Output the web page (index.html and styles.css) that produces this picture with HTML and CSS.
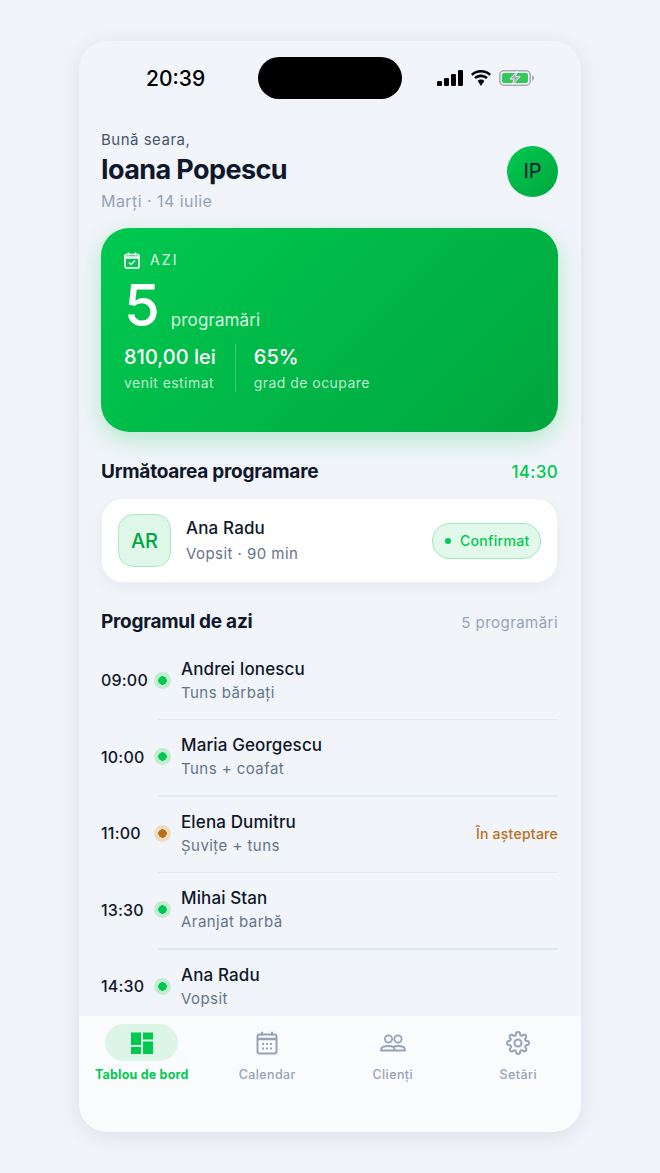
FILE: index.html
```html
<!DOCTYPE html>
<html lang="ro">
<head>
<meta charset="utf-8">
<title>Tablou de bord</title>
<link rel="stylesheet" href="styles.css">
</head>
<body>
<main class="phone">
  <div class="status">
    <span class="clock">20:39</span>
    <span class="island"></span>
    <span class="status-icons">
      <svg width="26" height="16" viewBox="0 0 26 16"><rect x="0" y="11" width="5" height="5" rx="1.2"/><rect x="7" y="8" width="5" height="8" rx="1.2"/><rect x="14" y="4" width="5" height="12" rx="1.2"/><rect x="21" y="0" width="5" height="16" rx="1.2"/></svg>
      <svg width="22" height="16" viewBox="0 0 22 16"><path d="M11 2.6c3.2 0 6.1 1.2 8.3 3.2l1.7-1.8C18.300 1.500 14.800 0 11 0S3.700 1.500 1 4l1.700 1.800C4.900 3.800 7.800 2.600 11 2.600z"/><path d="M11 7.200c1.900 0 3.700.7 5 1.900l1.800-1.800C16 5.600 13.600 4.600 11 4.600s-5 1-6.800 2.700L6 9.100c1.300-1.200 3.100-1.900 5-1.900z"/><path d="M11 9.600c-1.300 0-2.400.5-3.300 1.300L11 16l3.300-5.100c-.9-.8-2-1.300-3.300-1.300z"/></svg>
      <svg width="36" height="16" viewBox="0 0 36 16"><rect x=".8" y=".8" width="30.400" height="14.400" rx="4" fill="none" stroke="#a9adb3" stroke-width="1.600"/><rect x="3" y="3" width="26" height="10" rx="2" fill="#34c759"/><path d="M33 5.500c1.300.3 2 1.300 2 2.500s-.7 2.200-2 2.500z" fill="#a9adb3"/><path d="M18.500 1 11 9h4l-2 6 8-8.500h-4.300z" fill="#a9adb3" stroke="#f1f4f9" stroke-width="1"/></svg>
    </span>
  </div>
  <div class="scroll">
    <header class="head">
      <div class="head-text">
        <p class="hello">Bună seara,</p>
        <h1 class="name">Ioana Popescu</h1>
        <p class="date">Marți · 14 iulie</p>
      </div>
      <div class="avatar">IP</div>
    </header>

    <section class="hero">
      <div class="hero-top">
        <svg width="16" height="17" viewBox="0 0 16 17" fill="none" stroke="#fff"><rect x="1" y="2.500" width="14" height="13.500" rx="1.800" stroke-width="1.700"/><path d="M1 5.500h14" stroke-width="2.500"/><path d="M4.500 .5v3M11.500 .5v3" stroke-width="1.700"/><path d="m5 10.500 2 2 4-4" stroke-width="1.300"/></svg>
        <span>AZI</span>
      </div>
      <div class="hero-count"><span class="big">5</span><span class="unit">programări</span></div>
      <div class="stats">
        <div class="stat"><div class="stat-value">810,00 lei</div><div class="stat-label">venit estimat</div></div>
        <div class="stat stat-second"><div class="stat-value">65%</div><div class="stat-label">grad de ocupare</div></div>
      </div>
    </section>

    <div class="section-head next-head">
      <h2>Următoarea programare</h2>
      <span class="next-time">14:30</span>
    </div>
    <section class="next-card">
      <div class="initials">AR</div>
      <div class="next-info">
        <div class="next-name">Ana Radu</div>
        <div class="next-sub">Vopsit · 90 min</div>
      </div>
      <div class="pill"><i class="pill-dot"></i>Confirmat</div>
    </section>

    <div class="section-head today-head">
      <h2>Programul de azi</h2>
      <span class="count">5 programări</span>
    </div>

    <ul class="list">
      <li class="row"><span class="time">09:00</span><i class="dot"></i><div class="row-body"><div class="row-name">Andrei Ionescu</div><div class="row-sub">Tuns bărbați</div></div></li>
      <li class="row"><span class="time">10:00</span><i class="dot"></i><div class="row-body"><div class="row-name">Maria Georgescu</div><div class="row-sub">Tuns + coafat</div></div></li>
      <li class="row"><span class="time">11:00</span><i class="dot dot-wait"></i><div class="row-body"><div class="row-name">Elena Dumitru</div><div class="row-sub">Șuvițe + tuns</div></div><span class="wait">În așteptare</span></li>
      <li class="row"><span class="time">13:30</span><i class="dot"></i><div class="row-body"><div class="row-name">Mihai Stan</div><div class="row-sub">Aranjat barbă</div></div></li>
      <li class="row"><span class="time">14:30</span><i class="dot"></i><div class="row-body"><div class="row-name">Ana Radu</div><div class="row-sub">Vopsit</div></div></li>
    </ul>
  </div>
  <nav class="nav">
    <div class="tab tab-active">
      <span class="tab-icon"><svg width="24" height="24" viewBox="0 0 24 24" fill="#00c950"><path d="M1 1.500h10v12.500H1zM13 1.500h10v7H13zM13 10.500h10v12.500H13zM1 16h10v7H1z"/></svg></span>
      <span class="tab-label">Tablou de bord</span>
    </div>
    <div class="tab">
      <span class="tab-icon"><svg width="24" height="24" viewBox="0 0 24 24" fill="none" stroke="#94a3b8" stroke-width="2"><rect x="2.500" y="3.500" width="19" height="19" rx="2"/><path d="M2.500 8h19" stroke-width="2.500"/><path d="M7 .8v4M17 .8v4"/><path d="M7 13h2M11 13h2M15 13h2M7 17.500h2M11 17.500h2M15 17.500h2" stroke-width="2"/></svg></span>
      <span class="tab-label">Calendar</span>
    </div>
    <div class="tab">
      <span class="tab-icon"><svg width="26" height="24" viewBox="0 0 26 24" fill="none" stroke="#94a3b8" stroke-width="1.800"><circle cx="8.500" cy="8" r="3.600"/><circle cx="18" cy="8" r="3.600"/><path d="M1 19.500v-.6c0-2.300 2.500-3.900 7.500-3.900 2.400 0 4 .4 4.800 1 .9-.6 2.400-1 4.700-1 5 0 7 1.600 7 3.900v.6z"/><path d="M13.300 16c.8.700 1.200 1.700 1.200 3.500"/></svg></span>
      <span class="tab-label">Clienți</span>
    </div>
    <div class="tab">
      <span class="tab-icon"><svg width="24" height="24" viewBox="0 0 24 24" fill="none" stroke="#94a3b8" stroke-width="2" stroke-linejoin="round"><circle cx="12" cy="12" r="3.500"/><path d="M19.400 15a1.650 1.650 0 0 0 .33 1.820l.06.06a2 2 0 1 1-2.830 2.830l-.06-.06a1.650 1.650 0 0 0-2.800 1.170V21a2 2 0 1 1-4 0v-.09a1.650 1.650 0 0 0-2.800-1.170l-.06.06a2 2 0 1 1-2.830-2.830l.06-.06A1.650 1.650 0 0 0 3.300 14H3a2 2 0 1 1 0-4h.09a1.650 1.650 0 0 0 1.170-2.800l-.06-.06A2 2 0 1 1 7.030 4.310l.06.06A1.650 1.650 0 0 0 10 3.200V3a2 2 0 1 1 4 0v.09a1.650 1.650 0 0 0 2.800 1.170l.06-.06a2 2 0 1 1 2.830 2.830l-.06.06A1.650 1.650 0 0 0 20.800 10H21a2 2 0 1 1 0 4h-.09a1.650 1.650 0 0 0-1.510 1z"/></svg></span>
      <span class="tab-label">Setări</span>
    </div>
  </nav>
</main>
</body>
</html>
```
FILE: styles.css
```css
* { box-sizing: border-box; }
html, body { margin: 0; padding: 0; }
body {
  width: 660px;
  height: 1173px;
  background: #f1f4f9;
  font-family: Inter, "Liberation Sans", sans-serif;
  padding: 41px 79px;
  overflow: hidden;
  color: #0f172a;
}
p, h1, h2, ul { margin: 0; padding: 0; }
ul { list-style: none; }
.phone {
  width: 502px;
  height: 1091px;
  background: #f1f4f9;
  border-radius: 28px;
  box-shadow: 0 4px 24px rgba(15, 23, 42, .09);
  overflow: hidden;
  display: flex;
  flex-direction: column;
}
.status {
  height: 73px;
  flex: none;
  display: flex;
  align-items: center;
  padding: 0 46px 0 67px;
  margin-top: 0;
  justify-content: space-between;
  position: relative;
}
.clock { font-size: 21px; font-weight: 500; color: #000; margin-top: 1px; }
.island {
  position: absolute;
  left: 179px;
  top: 16px;
  width: 144px;
  height: 42px;
  background: #000;
  border-radius: 21px;
}
.status-icons { display: flex; align-items: center; gap: 7px; }
.scroll { flex: 1; min-height: 0; overflow: hidden; padding: 0 23px 0 22px; }
.head { display: flex; align-items: center; justify-content: space-between; height: 114px; }
.hello { font-size: 15px; line-height: 18px; color: #475569; letter-spacing: .5px; }
.name { font-size: 27px; line-height: 36px; font-weight: 700; letter-spacing: -.6px; margin-top: 3px; }
.date { font-size: 16px; line-height: 20px; color: #94a3b8; letter-spacing: .45px; margin-top: 3px; }
.avatar {
  width: 51px;
  height: 51px;
  border-radius: 50%;
  background: linear-gradient(135deg, #00c950, #00a63e);
  display: flex;
  align-items: center;
  justify-content: center;
  font-size: 20px;
  color: #0f172a;
}
.hero {
  height: 204px;
  margin-top: 0;
  border-radius: 28px;
  background: linear-gradient(135deg, #00c950, #00a63e);
  box-shadow: 0 8px 24px rgba(0, 201, 80, .25);
  padding: 23px 23px 0;
  color: #fff;
}
.hero-top { display: flex; align-items: center; gap: 10px; font-size: 14px; letter-spacing: 2.200px; line-height: 18px; color: rgba(255,255,255,.9); }
.hero-count { display: flex; align-items: baseline; gap: 11px; margin-top: 5px; height: 62px; }
.big { font-size: 58px; line-height: 62px; font-weight: 500; }
.unit { font-size: 17px; color: rgba(255,255,255,.85); letter-spacing: .1px; }
.stats { display: flex; margin-top: 8px; }
.stat-value { font-size: 20px; line-height: 26px; font-weight: 500; }
.stat-label { font-size: 14px; line-height: 18px; color: rgba(255,255,255,.75); letter-spacing: .45px; margin-top: 4px; }
.stat-second { margin-left: 19px; padding-left: 18px; border-left: 1px solid rgba(255,255,255,.25); }
.section-head { display: flex; align-items: center; justify-content: space-between; }
.section-head h2 { font-size: 19px; line-height: 24px; font-weight: 700; letter-spacing: -.25px; }
.next-head { margin-top: 28px; }
.next-time { font-size: 17px; font-weight: 500; color: #00c950; letter-spacing: .3px; }
.next-card {
  margin-top: 14px;
  height: 85px;
  background: #fff;
  border-radius: 22px;
  border: 1px solid #eef1f6;
  box-shadow: 0 4px 16px rgba(15, 23, 42, .05);
  display: flex;
  align-items: center;
  padding: 0 16px;
}
.initials {
  width: 53px;
  height: 53px;
  border-radius: 15px;
  background: #dff7e9;
  border: 1px solid #a6ebc3;
  color: #00a63e;
  display: flex;
  align-items: center;
  justify-content: center;
  font-size: 20px;
  font-weight: 500;
}
.next-info { flex: 1; margin-left: 15px; }
.next-name { font-size: 17px; line-height: 22px; font-weight: 500; letter-spacing: .15px; }
.next-sub { font-size: 15px; line-height: 20px; color: #64748b; letter-spacing: .45px; margin-top: 5px; }
.pill {
  width: 109px;
  height: 36px;
  border-radius: 18px;
  background: #e1f8ea;
  border: 1px solid #9ce9bc;
  color: #00c950;
  font-size: 14px;
  font-weight: 500;
  letter-spacing: .3px;
  display: flex;
  align-items: center;
  padding-left: 12px;
}
.pill-dot { width: 6px; height: 6px; border-radius: 50%; background: #00c950; margin-right: 9px; }
.today-head { margin-top: 27px; }
.count { font-size: 15px; color: #94a3b8; letter-spacing: .45px; }
.list { margin-top: 8px; }
.row { height: 76.500px; display: flex; align-items: center; position: relative; }
.row + .row::before {
  content: "";
  position: absolute;
  left: 57px;
  right: 0;
  top: 0;
  height: 1.500px;
  background: #e2e8f0;
}
.time { width: 53px; font-size: 16px; font-weight: 500; letter-spacing: .2px; }
.dot {
  width: 17px;
  height: 17px;
  margin-left: 0;
  border-radius: 50%;
  background: radial-gradient(circle, #00c950 0 4px, #c3ecd3 4.500px);
  flex: none;
}
.dot-wait { background: radial-gradient(circle, #b8701a 0 4px, #eedcc0 4.500px); }
.row-body { flex: 1; margin-left: 10px; }
.row-name { font-size: 17px; line-height: 22px; font-weight: 500; letter-spacing: .12px; }
.row-sub { font-size: 15px; line-height: 20px; color: #64748b; letter-spacing: .45px; margin-top: 3px; }
.wait { font-size: 14px; color: #b8701a; font-weight: 500; letter-spacing: .25px; }
.nav {
  flex: none;
  height: 116px;
  background: #fafbfd;
  display: grid;
  grid-template-columns: repeat(4, 1fr);
  align-items: start;
  padding: 8px 0 0 0;
}
.tab { display: flex; flex-direction: column; align-items: center; }
.tab-icon { width: 73px; height: 37px; border-radius: 19px; display: flex; align-items: center; justify-content: center; }
.tab-active .tab-icon { background: #dcf5e6; }
.tab-label { font-size: 12.500px; line-height: 16px; margin-top: 6px; color: #94a3b8; letter-spacing: .4px; font-weight: 500; white-space: nowrap; }
.tab-active .tab-label { color: #00c950; font-weight: 700; letter-spacing: .2px; }
```
